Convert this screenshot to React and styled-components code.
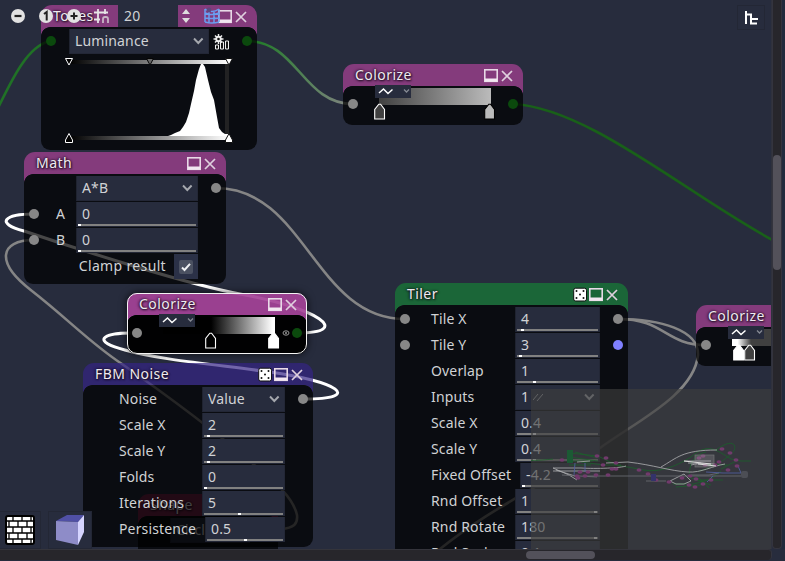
import React from "react";
import styled, { createGlobalStyle } from "styled-components";

const Global = createGlobalStyle`
  * { box-sizing: border-box; }
  body { margin: 0; background: #272c3d; overflow: hidden; font: 14px/22px "Noto Sans", "Open Sans", sans-serif; letter-spacing: .15px; color: #d0d2d5; }
`;

const COLORS = {
  magenta: "rgba(172,65,151,.7)",
  selected: "rgba(164,66,151,.92)",
  green: "rgba(23,127,54,.7)",
  indigo: "rgba(52,35,132,.7)",
  maroon: "rgba(160,35,85,.7)",
};

const Window = styled.div`
  width: 785px; height: 561px; overflow: hidden; background: #272c3d;
  display: grid; grid-template-columns: 772px 10px 3px; grid-template-rows: 549px 12px;
`;
const Canvas = styled.main`
  position: relative; overflow: hidden; background: #272c3d; border-right: 1px solid #2f313c;
`;
const Wires = styled.svg`
  position: absolute; left: 0; top: 0; width: 772px; height: 549px; fill: none; stroke-width: 2.6;
`;
const NodeBox = styled.section`
  position: absolute; isolation: isolate; left: ${p => p.$x}px; top: ${p => p.$y}px;
  width: ${p => p.$w}px; height: ${p => p.$h}px;
  display: flex; flex-direction: column; border-radius: 11px;
  ${p => p.$selected && "box-shadow: 0 0 7px 1px rgba(0,0,0,.6);"}
  &::after {
    content: ""; position: absolute; inset: 0; border-radius: 10px; pointer-events: none;
    border: ${p => (p.$selected ? "1.5px solid #f4f4f4" : "0")};
  }
`;
const Header = styled.header`
  position: relative; flex: none; height: 22px; padding: 0 8px 0 12px;
  display: flex; align-items: center; border-radius: 11px 11px 0 0;
  background: ${p => p.$color};
  &::after {
    content: ""; position: absolute; left: 0; right: 0; top: 22px; height: 9px;
    background:
      radial-gradient(circle at 9px 9px, transparent 8.6px, ${p => p.$color} 9.2px) left / 9px 9px no-repeat,
      radial-gradient(circle at 0 9px, transparent 8.6px, ${p => p.$color} 9.2px) right / 9px 9px no-repeat;
  }
`;
const Title = styled.h2`
  flex: 1; margin: 0; font-size: 14px; line-height: 22px; height: 22px; font-weight: 400; color: #f0eaf0; letter-spacing: .45px;
  text-shadow: 0 0 2px rgba(20,10,25,.85), 1px 1px 2px rgba(20,10,25,.8), -1px 0 3px rgba(20,10,25,.7);
`;
const Body = styled.div`
  flex: 1; padding: 2px 28px 0 ${p => p.$pad ?? 36}px; border-radius: 9px;
  background: ${p => (p.$selected ? "rgba(0,0,0,.97)" : "rgba(0,0,0,.72)")};
`;
const Row = styled.div`
  position: relative; height: 25px; margin: 0 -28px 1px -${p => p.$pad ?? 36}px;
  padding: 0 28px 0 ${p => p.$pad ?? 36}px; display: flex; align-items: center; justify-content: flex-end;
`;
const Label = styled.span`
  flex: ${p => (p.$tight ? "none" : 1)}; width: 0; white-space: nowrap; line-height: 22px; height: 23px;
  ${p => p.$tight && "width: auto; margin-right: 8px; letter-spacing: .35px;"}
`;
const Port = styled.i`
  position: absolute; width: 10px; height: 10px; border-radius: 50%; top: ${p => p.$top ?? 7}px;
  ${p => (p.$side === "out" ? "right" : "left")}: 5px; background: ${p => p.$color ?? "#878787"};
`;
const Field = styled.div`
  position: relative; z-index: 1; flex: none; width: ${p => p.$w}px; height: 25px; padding: 0 3px 0 5px; line-height: 23px;
  display: flex; justify-content: space-between; background: #272c3d; border: 1px solid #232736; border-top: 0;
  border-left-color: #1f2330;
`;
const Value = styled.span`
  white-space: nowrap;
`;
const Track = styled.div`
  position: absolute; left: 1px; right: 1px; bottom: 0; height: 2px; background: #818181;
`;
const Handle = styled.div`
  width: 3px; height: 2px; background: white; margin-left: ${p => p.$at}px;
`;
const CheckPanel = styled.div`
  flex: none; width: 24px; height: 25px; background: #2b3147; display: grid; place-items: center;
`;
const CheckMark = styled.svg`
  width: 14px; height: 14px; border-radius: 2px; background: #4b5161; fill: none; stroke: #eef0f2; stroke-width: 2;
`;
const Icon = styled.svg`
  flex: none; display: block; overflow: visible; fill: none; width: ${p => p.$s ?? 16}px; height: ${p => p.$s ?? 16}px;
`;

const Minimize = () => (
  <Icon viewBox="0 0 16 16"><rect x="1.8" y="2.8" width="12.4" height="11.5" stroke="#e8d9e7" strokeWidth="1.6" /><path d="M2 13H14" stroke="#f2e7f1" strokeWidth="3" /></Icon>
);
const Close = () => (
  <Icon viewBox="0 0 16 16"><path d="M3 4L13 14M13 4L3 14" stroke="#dfd0de" strokeWidth="1.7" /></Icon>
);
const Dice = () => (
  <Icon viewBox="0 0 16 16"><rect x="1.7" y="2.2" width="12.8" height="12.8" rx="2" fill="white" stroke="#111" strokeWidth="1" />
    {[[4.5, 5], [11.5, 5], [8, 8.5], [4.5, 12], [11.5, 12]].map(([x, y]) => <circle key={x + "-" + y} cx={x} cy={y} r="1" fill="#111" />)}
  </Icon>
);
const Chevron = () => (
  <Icon viewBox="0 0 16 16"><path d="M5 9.5L9.3 14L13.6 9.5" stroke="#a5a8ae" strokeWidth="1.9" /></Icon>
);

const GraphNode = ({ title, color, x, y, w, h, pad, dice, selected, children }) => (
  <NodeBox $x={x} $y={y} $w={w} $h={h} $selected={selected}>
    <Header $color={selected ? COLORS.selected : COLORS[color]}>
      <Title>{title}</Title>{dice && <Dice />}<Minimize /><Close />
    </Header>
    <Body $pad={pad} $selected={selected}>{children}</Body>
  </NodeBox>
);
const Dropdown = ({ w, value }) => <Field $w={w}><Value>{value}</Value><Chevron /></Field>;
const NumberField = ({ w, value, at }) => (
  <Field $w={w}><Value>{value}</Value><Track><Handle $at={at} /></Track></Field>
);

const GradientRow = styled.div`
  position: relative; height: 36px; margin: 0 -28px 0 -36px; padding: 0 32px 0 36px;
`;
const Ramp = styled.div`
  height: 17px; background: ${p => p.$fill};
`;
const CurveButton = styled.div`
  position: absolute; left: 32px; top: -3px; width: 36px; height: 13px; padding: 0 2px; background: #272c3d;
`;
const CurveGlyph = styled.svg`
  display: block; width: 34px; height: 13px; fill: none;
`;
const Cursor = styled.svg`
  position: absolute; left: ${p => p.$at}px; top: 15px; width: 12px; height: 17px;
`;
const Watch = styled.svg`
  position: absolute; right: 15px; top: 12px; width: 10px; height: 8px; fill: none; stroke: #999;
`;
const Colorize = ({ x, y, ramp, cursors, output, selected }) => (
  <GraphNode title="Colorize" color="magenta" x={x} y={y} w={180} h={61} selected={selected}>
    <GradientRow>
      <Port $side="in" $top={11} /><Port $side="out" $top={11} $color={output} />
      <Ramp $fill={ramp} />
      <CurveButton>
        <CurveGlyph><path d="M2 8L6.5 4L11 8.5L15.5 4.5" stroke="white" strokeWidth="1.5" /><path d="M27 4.5L29.5 7L32 4.5" stroke="#858993" strokeWidth="1.3" /></CurveGlyph>
      </CurveButton>
      {cursors.map(c => (
        <Cursor key={c.at} $at={c.at} viewBox="0 0 12 17"><path d="M.7 16V6.5L4.8 1.2H6.6L10.5 6.5V16Z" fill={c.fill} stroke={c.stroke} strokeWidth="1.1" /></Cursor>
      ))}
      {selected && <Watch viewBox="0 0 10 8"><ellipse cx="4" cy="4" rx="3" ry="2.2" /><circle cx="4" cy="4" r=".7" /></Watch>}
    </GradientRow>
  </GraphNode>
);

const LevelRow = styled.div`
  display: flex; align-items: center; gap: 4px; height: 25px; margin: 0 0 1px;
`;
const Histogram = styled.svg`
  display: block; width: 172px; height: 92px; margin: 0 0 0 -6px;
`;
const TonesPorts = styled.div`
  position: relative; height: 0; margin: 0 -28px 0 -28px;
`;

const Zoombar = styled.nav`
  position: absolute; left: 10px; top: 5px; height: 22px; display: flex; align-items: center;
`;
const Tool = styled.div`
  width: ${p => p.$w ?? 28}px; height: 22px; display: flex; align-items: center; justify-content: flex-start;
`;
const SnapInput = styled.div`
  width: 60px; height: 22px; padding-left: 6px; line-height: 22px; background: #272c3d;
`;
const LayoutButton = styled.div`
  position: absolute; left: 737px; top: 5px; width: 28px; height: 25px; border: 1px solid #232735; display: grid; place-items: center;
`;
const PreviewBar = styled.nav`
  position: absolute; left: -2px; bottom: 0; height: 38px; display: flex; gap: 7px;
`;
const PreviewButton = styled.div`
  width: ${p => p.$w}px; height: 38px; background: #272c3d; border: 1px solid #232735; display: grid; place-items: center;
`;
const Minimap = styled.div`
  position: absolute; z-index: 5; left: 531px; top: 389px; width: 240px; height: 160px; background: rgba(62,62,62,.65);
`;
const VScroll = styled.div`
  background: #27262b; border: 1px solid #34343e; border-top: 0; border-radius: 0 0 4px 4px; padding-top: 155px;
`;
const VThumb = styled.div`
  width: 8px; height: 115px; border-radius: 4px; background: #53515a;
`;
const HScroll = styled.div`
  grid-column: 1; height: 11px; padding: 1px 0 0 526px; background: #27262b; border-radius: 0 4px 4px 0; border-top: 1px solid #34343b; border-right: 1px solid #34343e;
`;
const HThumb = styled.div`
  width: 69px; height: 8px; border-radius: 4px; background: #53515a;
`;
const Edge = styled.div`
  background: #222b3d;
`;

const mathRows = [["A", 0], ["B", 0]];
const fbmRows = [["Scale X", "2", 3], ["Scale Y", "2", 3], ["Folds", "0", 0], ["Iterations", "5", 34], ["Persistence", "0.5", 37]];
const tilerRows = [["Tile X", "4", 4], ["Tile Y", "3", 2], ["Overlap", "1", 16], ["Inputs", "1", null], ["Scale X", "0.4", 16], ["Scale Y", "0.4", 16], ["Fixed Offset", "-4.2", 0], ["Rnd Offset", "1", 77], ["Rnd Rotate", "180", 77], ["Rnd Scale", "0.1", 8]];

const MapDrawing = () => (
  <svg width="240" height="160" fill="none" strokeWidth=".85">
    <g stroke="#1c5e2c">
      <path d="M22 70C5 72 0 71 -6 72M38 64L67 67L75 71L85 76L108 80C130 86 150 74 160 68C177 53 185 61 200 70L210 72L220 72M38 68L67 72M38 72H62M38 76H60M44 63L66 69M50 73L72 76L90 76M158 90C158 74 163 65 175 63M168 82C185 78 194 70 199 66C208 60 205 46 185 61M142 95H163L180 90L190 82M145 98L170 96M158 88L180 96M165 86L178 99M163 91H192M170 75L196 76M190 80L205 72" />
    </g>
    <g stroke="#a9aaac">
      <path d="M22 79H50C65 80 90 79 95 77M22 82H69M22 79L38 86L46 91M25 81L47 88M75 74L97 73C123 76 139 82 157 83C170 84 181 77 194 75M130 78C146 69 151 61 186 61M153 72H180M157 74L184 75M160 76L170 74M139 92L153 85L160 92L153 95H145L139 92M46 73L59 72" />
    </g>
    <path d="M55 87H210M31 86L66 88M115 92H135M160 86L178 86L188 84" stroke="#6c6d72" />
    <path d="M44 74L43 86M54 74V83M175 83L192 84L210 84L207 77M176 93L182 87" stroke="#5160a0" />
    <rect x="36" y="61" width="6" height="13" fill="#1b5a34" />
    <g fill="#713a6c">
      {[[31,71],[66,67],[75,69],[72,76],[85,74],[81,80],[85,80],[57,83],[49,83],[46,87],[47,89],[54,87],[65,86],[77,86],[108,81],[117,85],[125,91],[138,93],[151,89],[191,60],[199,64],[205,71],[206,77],[197,81],[188,73],[158,96],[164,98],[172,95],[180,91],[165,90],[168,69],[172,67],[174,76],[159,87],[184,76]].map(([x, y], i) => <ellipse key={i} cx={x} cy={y} rx="2.5" ry="1.7" />)}
    </g>
    <rect x="120" y="85" width="5" height="7" fill="#34336b" />
    <rect x="164" y="66" width="19" height="12" fill="rgba(180,170,180,.25)" stroke="#727477" strokeWidth=".7" />
    <path d="M153 72L180 75M167 75L185 77" stroke="#ddd" strokeWidth="1.2" />
    <rect x="210" y="82" width="7" height="7" rx="2" fill="#4c4e55" />
  </svg>
);

export default function App() {
  return (
    <Window>
      <Global />
      <Canvas>
        <GraphNode title="Shape" color="maroon" x={138} y={494} w={140} h={100} pad={32}>
          <Row $pad={32}><Dropdown w={80} value="Circle" /></Row>
        </GraphNode>
        <Wires>
          <defs>
            <linearGradient id="tone-wire"><stop stopColor="#187b20" /><stop offset="1" stopColor="#858585" /></linearGradient>
          </defs>
          <g stroke="#207126">
            <path d="M-3 110C13 77 28 46 50 41" />
            <path d="M513 104C590 108 690 197 778 243" stroke="#196019" />
          </g>
          <path d="M247 41C297 41 303 104 353 104" stroke="url(#tone-wire)" />
          <g stroke="#858585">
            <path d="M216 188C305 188 315 319 405 319" />
            <path d="M618 319C665 319 665 345 706 345" />
            <path d="M618 319C660 319 699 330 698 355C694 395 635 422 600 448C540 487 490 508 435 553" />
            <path d="M34 240C-1 240 -5 263 32 291C68 319 90 343 122 364C165 394 210 427 252 463C276 483 293 497 297 515C298 524 294 528 281 529" />
          </g>
          <g stroke="#fff" strokeWidth="3">
            <path d="M34 214C5 214 -6 223 24 231C80 250 190 285 240 294C318 308 354 333 297 333" />
            <path d="M137 333C99 332 92 342 125 350C160 360 220 365 270 372C336 381 366 399 303 399" />
          </g>
        </Wires>

        <GraphNode title="Tones" color="magenta" x={41} y={5} w={216} h={145} pad={28}>
          <TonesPorts><Port $side="in" $color="#0b490d" /><Port $side="out" $color="#0b490d" /></TonesPorts>
          <LevelRow><Dropdown w={140} value="Luminance" />
            <Icon viewBox="0 0 16 16">
              <g stroke="#eee"><path d="M2.5 15V11H5.5V15ZM7.5 15V8H10.5V15ZM12.5 15V7H15.5V15Z" strokeWidth="1" fill="#171717" /><circle cx="5.5" cy="5" r="2.8" fill="#eee" /><path d="M5.5 0V10M.5 5H10.5M2 1.5L9 8.5M9 1.5L2 8.5" strokeWidth="1.5" /><circle cx="5.5" cy="5" r="1.3" fill="#111" stroke="none" /></g>
            </Icon>
          </LevelRow>
          <Histogram viewBox="0 0 172 92">
            <defs><linearGradient id="levels"><stop stopColor="#000" /><stop offset="1" stopColor="#fff" /></linearGradient></defs>
            <rect x="6" y="5" width="160" height="4" fill="url(#levels)" />
            <rect x="162" y="9" width="4" height="72" fill="#222223" />
            <path d="M105 81L108 80L112 78L117 76L120 72L123 67L126 58L128 49L131 36L133 25L136 14L138 9H140L142 12L145 25L148 37L151 45L154 62L156 73L159 77L162 79H166V81Z" fill="white" />
            <rect x="6" y="81" width="160" height="4" fill="url(#levels)" />
            <g stroke="white"><path d="M2.5 3.5H9.5L6 10Z" fill="#000" /><path d="M2.5 87.5V85L6 78.5L9.5 85V87.5Z" fill="#000" /></g>
            <path d="M83.5 3.5H90.5L87 10Z" fill="#666" stroke="#050505" />
            <path d="M162.5 3.5H169.5L166 10ZM162.5 87.5V85L166 78.5L169.5 85V87.5Z" fill="#fff" stroke="#111" />
          </Histogram>
        </GraphNode>

        <Colorize x={343} y={64} output="#0b490d" ramp="linear-gradient(90deg,#404040,#bbb)" cursors={[{ at: 31, fill: "#404040", stroke: "#fff" }, { at: 141, fill: "#bbb", stroke: "#000" }]} />

        <GraphNode title="Math" color="magenta" x={24} y={152} w={202} h={132} pad={32}>
          <Row $pad={32}><Port $side="out" /><Dropdown w={122} value="A*B" /></Row>
          {mathRows.map(([name, value]) => <Row $pad={32} key={name}><Port $side="in" /><Label>{name}</Label><NumberField w={122} value={value} at={0} /></Row>)}
          <Row $pad={32}><Label $tight>Clamp result</Label><CheckPanel><CheckMark viewBox="0 0 14 14"><path d="M3 7.5L5.5 10L11 3.8" /></CheckMark></CheckPanel></Row>
        </GraphNode>

        <GraphNode title="FBM Noise" color="indigo" x={83} y={363} w={230} h={184} dice>
          <Row><Port $side="out" /><Label>Noise</Label><Dropdown w={83} value="Value" /></Row>
          {fbmRows.map(([name, value, at]) => <Row key={name}><Label>{name}</Label><NumberField w={name === "Persistence" ? 80 : 83} value={value} at={at} /></Row>)}
        </GraphNode>

        <Colorize x={127} y={293} selected output="#0b490d" ramp="linear-gradient(90deg,#000 43%,#fff 98%)" cursors={[{ at: 78, fill: "#000", stroke: "#fff" }, { at: 141, fill: "#fff", stroke: "#fff" }]} />

        <GraphNode title="Tiler" color="green" x={395} y={283} w={233} h={290} dice>
          {tilerRows.map(([name, value, at], i) => (
            <Row key={name}>
              {i < 2 && <><Port $side="in" /><Port $side="out" $color={i ? "#8080ff" : undefined} /></>}
              <Label>{name}</Label>
              {at === null
                ? <Field $w={85}><Value>1 <svg width="10" height="10" stroke="#a5a8ae"><path d="M0 8L5 2M4 9L10 2" /></svg></Value><Chevron /></Field>
                : <NumberField w={name === "Fixed Offset" ? 80 : 85} value={value} at={at} />}
            </Row>
          ))}
        </GraphNode>

        <Colorize x={696} y={305} output="#878787" ramp="linear-gradient(90deg,#fff 5%,#404040 17%)" cursors={[{ at: 37, fill: "#fff", stroke: "#fff" }, { at: 48, fill: "#404040", stroke: "#fff" }]} />

        <Zoombar>
          <Tool><Icon viewBox="0 0 16 16"><circle cx="8" cy="8" r="7" fill="#e2e2e2" /><path d="M4.5 8H11.5" stroke="#222" strokeWidth="2.2" /></Icon></Tool>
          <Tool><Icon viewBox="0 0 16 16"><circle cx="8" cy="8" r="7" fill="#e2e2e2" /><path d="M6 6L8.7 4V12.5" stroke="#222" strokeWidth="2" /></Icon></Tool>
          <Tool><Icon viewBox="0 0 16 16"><circle cx="8" cy="8" r="7" fill="#e2e2e2" /><path d="M4.5 8H11.5M8 4.5V11.5" stroke="#222" strokeWidth="2" /></Icon></Tool>
          <Tool $w={24}><Icon viewBox="0 0 16 16"><path d="M4 1V15M0 4.5H14M0 11.5H6M11 1V6" stroke="#e6e6e6" strokeWidth="1.8" /><path d="M9 15V11Q9 9 11 9H12Q14 9 14 11V15" stroke="#c7b5c5" strokeWidth="1.8" /></Icon></Tool>
          <SnapInput>20</SnapInput>
          <Tool $w={26}><Icon viewBox="0 0 16 16"><path d="M4 6L8 1L12 6ZM4 10L8 15L12 10Z" fill="#dedede" /></Icon></Tool>
          <Tool><Icon viewBox="0 0 16 16"><path d="M1 1Q8 6 15 1M1 5Q8 8 15 5M1 10Q8 11 15 10M1 14Q8 16 15 14M1 1V14M5 3V15M10 3V15M15 1V14" stroke="#6a9df0" strokeWidth="1.5" /><circle cx="5" cy="2" r="2.4" fill="#5e477e" /></Icon></Tool>
        </Zoombar>

        <LayoutButton><Icon viewBox="0 0 16 16"><path d="M3 1V14M3 4.5H8V13.5H14M8 9H15" stroke="#fff" strokeWidth="2" /></Icon></LayoutButton>
        <PreviewBar>
          <PreviewButton $w={43}>
            <Icon $s={30} viewBox="0 0 30 30"><rect x="1" y="1" width="28" height="28" rx="2" fill="#fff" stroke="#000" strokeWidth="2" /><path d="M1 6H29M1 12H29M1 18H29M1 24H29M8 1V6M17 1V6M26 1V6M4 6V12M13 6V12M22 6V12M8 12V18M17 12V18M26 12V18M4 18V24M13 18V24M22 18V24M8 24V29M17 24V29M26 24V29" stroke="#000" strokeWidth="1.3" /></Icon>
          </PreviewButton>
          <PreviewButton $w={44}>
            <Icon $s={30} viewBox="0 0 30 30"><path d="M1 6L12 0H29L23 7Z" fill="#5050a5" /><path d="M1 6L23 7V30L1 25Z" fill="#8e8cc8" /><path d="M23 7L29 0V17L23 30Z" fill="#d5d4ff" /></Icon>
          </PreviewButton>
        </PreviewBar>
        <Minimap><MapDrawing /></Minimap>
      </Canvas>
      <VScroll><VThumb /></VScroll>
      <Edge />
      <HScroll><HThumb /></HScroll>
    </Window>
  );
}
